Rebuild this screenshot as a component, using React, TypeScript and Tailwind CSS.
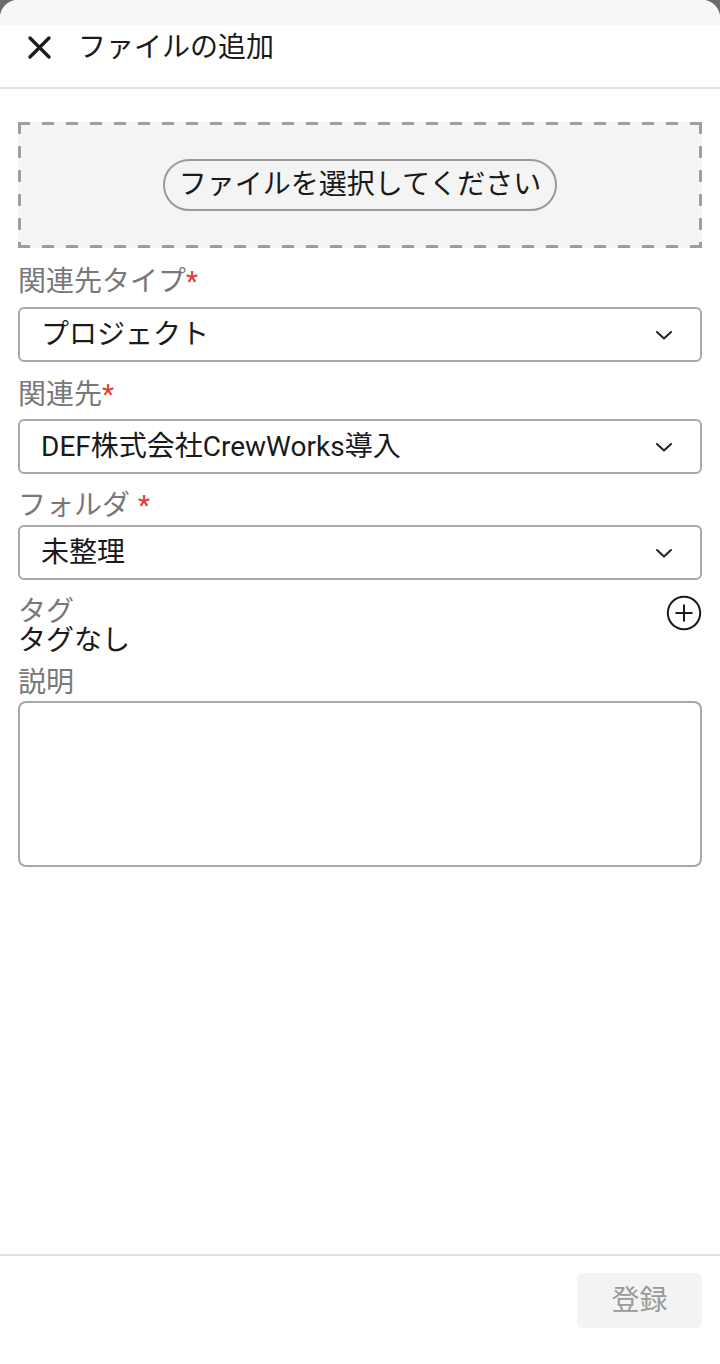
import React from "react";

const font = { fontFamily: 'Roboto, "Noto Sans CJK JP", sans-serif' };

function Chevron() {
  return (
    <svg width="18" height="12" viewBox="0 0 18 12" fill="none">
      <path d="M2 3 L9 9.5 L16 3" stroke="#222" strokeWidth="2" strokeLinecap="round" strokeLinejoin="round" />
    </svg>
  );
}

function SelectBox({ value }: { value: string }) {
  return (
    <div className="flex h-[55px] items-center justify-between rounded-[6px] border-2 border-[#a8a8a8] bg-white pl-[21px] pr-[27px]">
      <span className="text-[28px] leading-none text-[#1a1a1a]">{value}</span>
      <Chevron />
    </div>
  );
}

function Label({ text, star, space }: { text: string; star?: boolean; space?: boolean }) {
  return (
    <div className="text-[28px] leading-[36px] text-[#787878]">
      {text}
      {star && <span className={`text-[#e53935] ${space ? "ml-[8px]" : ""}`}>*</span>}
    </div>
  );
}

export default function App() {
  return (
    <div className="flex h-[1364px] w-[720px] flex-col bg-[#6b6b6b]" style={font}>
      <div className="flex flex-1 flex-col overflow-hidden rounded-t-[18px] bg-white">
        <div className="h-[25px] bg-[#f7f7f7]" />
        <div className="flex h-[64px] items-center border-b-2 border-[#e2e2e2] pb-[17px]">
          <svg className="ml-[28px]" width="23" height="23" viewBox="0 0 23 23">
            <path d="M2 2 L21 21 M21 2 L2 21" stroke="#1a1a1a" strokeWidth="3.2" strokeLinecap="round" />
          </svg>
          <span className="ml-[27px] text-[28px] leading-none text-[#1a1a1a]">ファイルの追加</span>
        </div>

        <div className="flex-1 px-[18px] pt-[33px]">
          <div className="flex h-[126px] items-center justify-center [background:repeating-linear-gradient(90deg,#9e9e9e_0_12px,transparent_12px_24px)_top_left/100%_3px_no-repeat,repeating-linear-gradient(90deg,#9e9e9e_0_12px,transparent_12px_24px)_bottom_left/100%_3px_no-repeat,repeating-linear-gradient(180deg,#9e9e9e_0_12px,transparent_12px_24px)_top_left/3px_100%_no-repeat,repeating-linear-gradient(180deg,#9e9e9e_0_12px,transparent_12px_24px)_top_right/3px_100%_no-repeat,#f4f4f4]">
            <div className="flex h-[52px] w-[394px] items-center justify-center rounded-full border-2 border-[#9a9a9a] text-[28px] leading-none text-[#1a1a1a]">
              ファイルを選択してください
            </div>
          </div>

          <div className="mt-[16px] mb-[7px]">
            <Label text="関連先タイプ" star />
          </div>
          <SelectBox value="プロジェクト" />

          <div className="mt-[15px] mb-[6px]">
            <Label text="関連先" star />
          </div>
          <SelectBox value="DEF株式会社CrewWorks導入" />

          <div className="mt-[14px] mb-[1px]">
            <Label text="フォルダ" star space />
          </div>
          <SelectBox value="未整理" />

          <div className="mt-[18px] flex items-start justify-between">
            <div>
              <div className="text-[28px] leading-[28px] text-[#787878]">タグ</div>
              <div className="text-[28px] leading-[29px] text-[#1a1a1a]">タグなし</div>
            </div>
            <svg width="36" height="36" viewBox="0 0 36 36" fill="none" className="mt-[-3px]">
              <circle cx="18" cy="18" r="16.2" stroke="#1a1a1a" strokeWidth="2" />
              <path d="M18 9.5 V26.5 M9.5 18 H26.5" stroke="#1a1a1a" strokeWidth="2" />
            </svg>
          </div>

          <div className="mt-[10px]">
            <Label text="説明" />
          </div>
          <div className="h-[166px] rounded-[8px] border-2 border-[#a8a8a8] bg-white" />
        </div>

        <div className="flex h-[110px] justify-end border-t-2 border-[#e2e2e2] pr-[18px] pt-[17px]">
          <div className="flex h-[55px] w-[125px] items-center justify-center rounded-[6px] bg-[#f3f3f3] text-[28px] leading-none text-[#9a9a9a]">
            登録
          </div>
        </div>
      </div>
    </div>
  );
}
